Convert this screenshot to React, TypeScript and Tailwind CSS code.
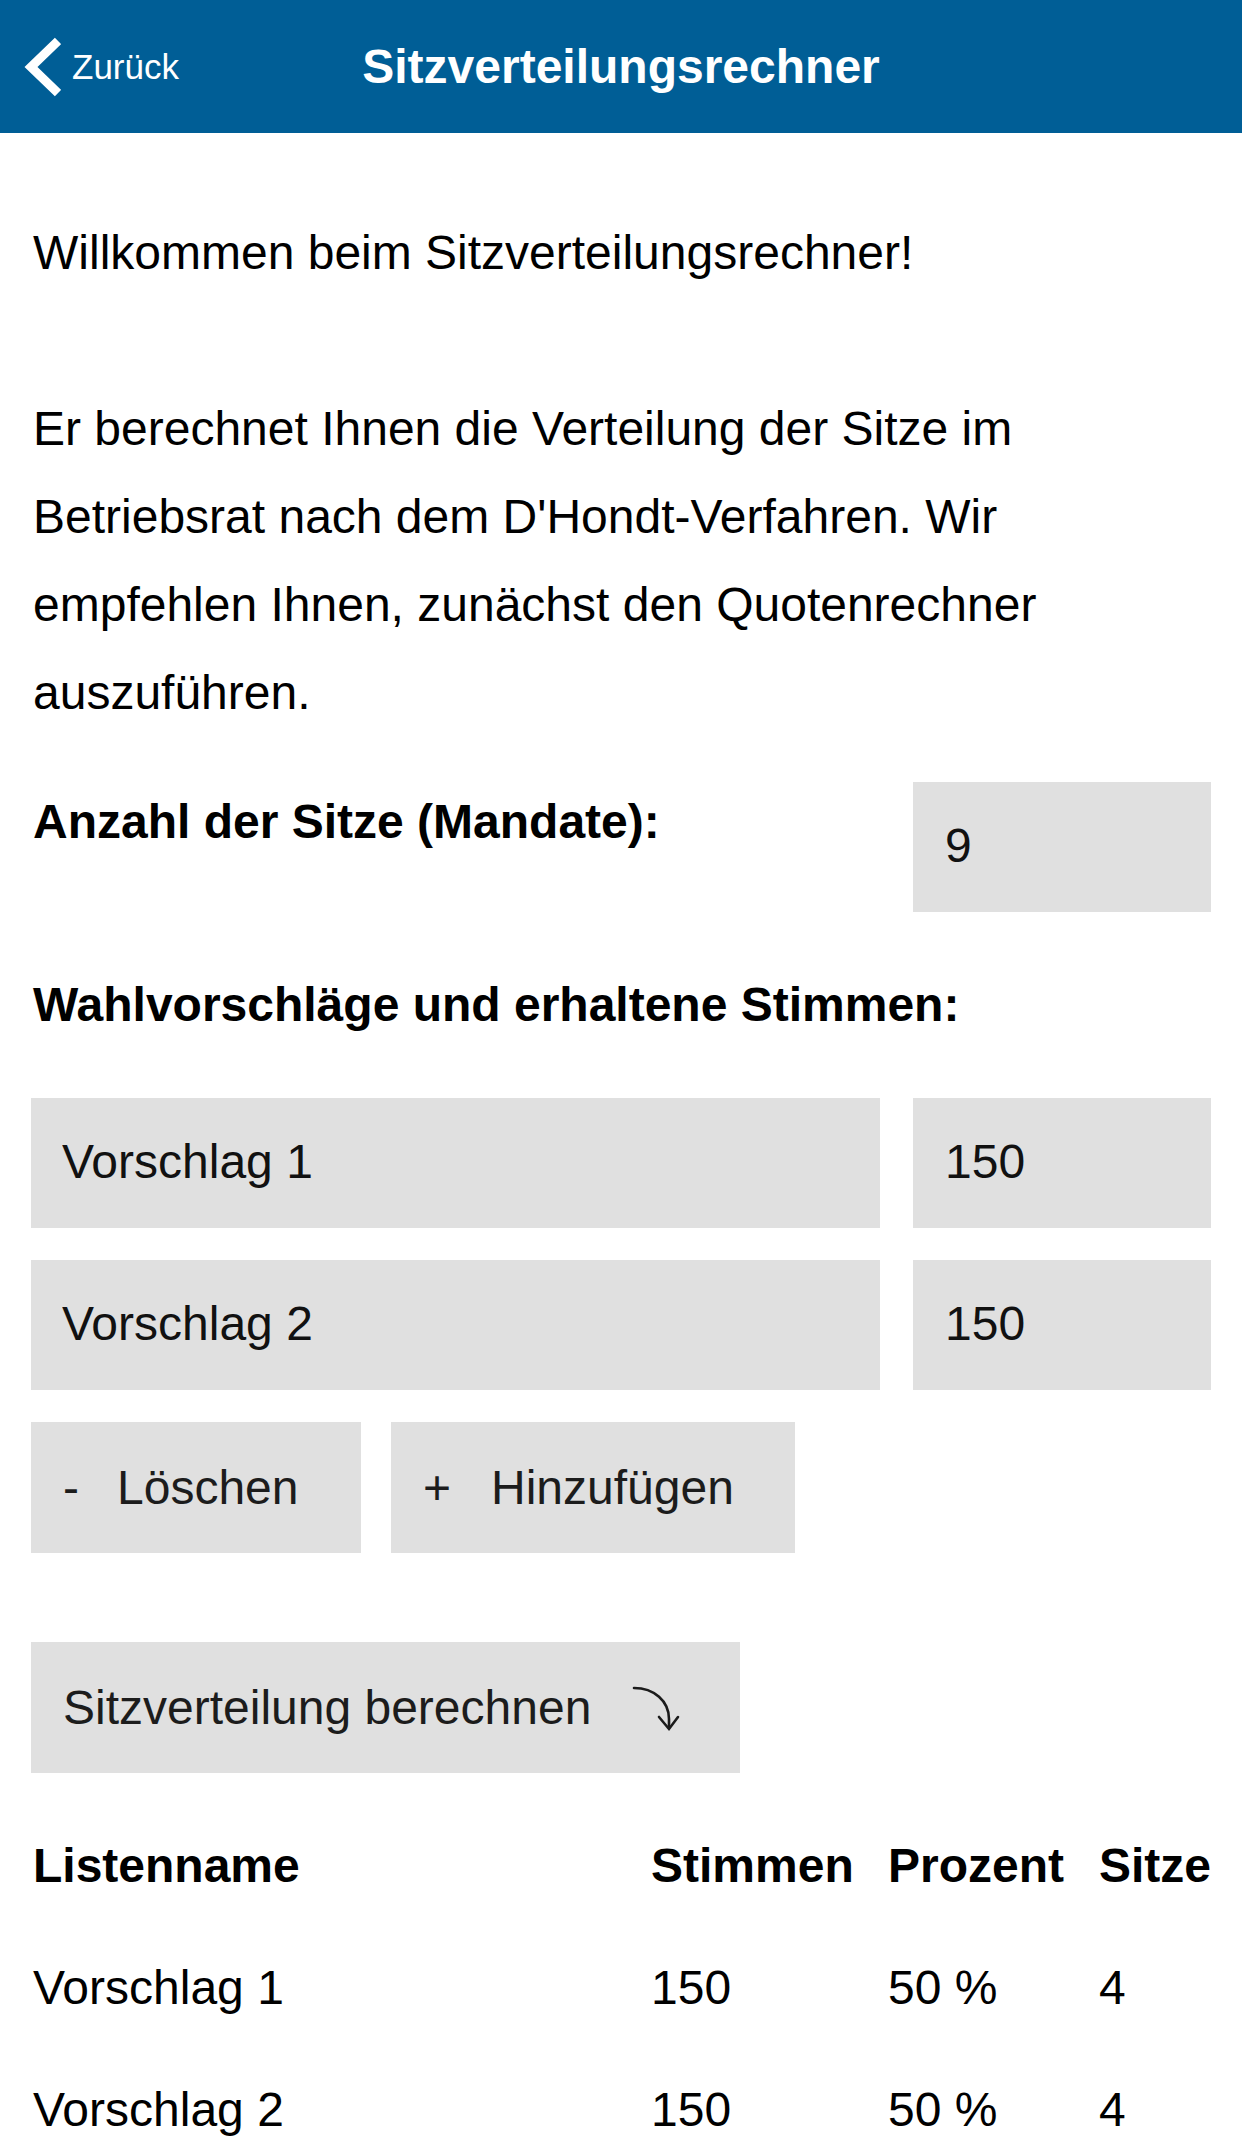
import React from "react";

const rows = [
  { name: "Vorschlag 1", votes: 150 },
  { name: "Vorschlag 2", votes: 150 },
];

const results = [
  { name: "Vorschlag 1", votes: "150", pct: "50 %", seats: "4" },
  { name: "Vorschlag 2", votes: "150", pct: "50 %", seats: "4" },
];

function BackChevron() {
  return (
    <svg width="40" height="60" viewBox="0 0 40 60" aria-hidden="true">
      <polyline
        points="37,4 10,30 37,56"
        fill="none"
        stroke="#ffffff"
        strokeWidth="9"
        strokeLinejoin="miter"
      />
    </svg>
  );
}

function CurvedArrow() {
  return (
    <svg width="50" height="50" viewBox="0 0 50 50" aria-hidden="true">
      <path
        d="M4 5 C 24 5, 39 18, 39 36 L 39 45"
        fill="none"
        stroke="#1c1c1c"
        strokeWidth="2.6"
        strokeLinecap="round"
      />
      <path
        d="M29 34 L39 46 L48 34"
        fill="none"
        stroke="#1c1c1c"
        strokeWidth="2.6"
        strokeLinecap="round"
        strokeLinejoin="miter"
      />
    </svg>
  );
}

export default function App() {
  return (
    <div className="min-h-screen bg-white font-['Liberation_Sans',Arial,sans-serif] text-black">
      {/* Navigation bar */}
      <header className="grid h-[133px] grid-cols-[1fr_auto_1fr] items-center bg-[#005e96] text-white">
        <button className="flex items-center gap-[11px] justify-self-start pl-[21px]">
          <BackChevron />
          <span className="text-[35px] leading-none">Zurück</span>
        </button>
        <h1 className="text-[48px] font-bold leading-none">Sitzverteilungsrechner</h1>
        <div />
      </header>

      <main className="px-[31px]">
        {/* Intro */}
        <p className="mt-[76px] pl-[2px] text-[48px] leading-[88px]">
          Willkommen beim Sitzverteilungsrechner!
          <br />
          <br />
          Er berechnet Ihnen die Verteilung der Sitze im
          <br />
          Betriebsrat nach dem D'Hondt-Verfahren. Wir
          <br />
          empfehlen Ihnen, zunächst den Quotenrechner
          <br />
          auszuführen.
        </p>

        {/* Seat count */}
        <div className="mt-[45px] flex items-start justify-between">
          <label className="mt-[12px] pl-[2px] text-[48px] font-bold leading-[56px]">
            Anzahl der Sitze (Mandate):
          </label>
          <input
            readOnly
            value="9"
            className="h-[130px] w-[298px] bg-[#e0e0e0] px-[32px] pb-[4px] text-[48px] text-[#111111] outline-none"
          />
        </div>

        <h2 className="mt-[65px] pl-[2px] text-[48px] font-bold leading-[56px]">
          Wahlvorschläge und erhaltene Stimmen:
        </h2>

        {/* Lists and votes */}
        <div className="mt-[65px] flex flex-col gap-[32px]">
          {rows.map((r) => (
            <div key={r.name} className="flex gap-[33px]">
              <input
                readOnly
                value={r.name}
                className="h-[130px] flex-1 bg-[#e0e0e0] px-[31px] pb-[3px] text-[48px] text-[#111111] outline-none"
              />
              <input
                readOnly
                value={String(r.votes)}
                className="h-[130px] w-[298px] bg-[#e0e0e0] px-[32px] pb-[3px] text-[48px] text-[#111111] outline-none"
              />
            </div>
          ))}

          <div className="flex gap-[30px]">
            <button className="flex h-[131px] w-[330px] items-center gap-[38px] bg-[#e0e0e0] pl-[32px] text-[48px] text-[#1c1c1c]">
              <span>-</span>
              <span>Löschen</span>
            </button>
            <button className="flex h-[131px] w-[404px] items-center gap-[40px] bg-[#e0e0e0] pl-[32px] text-[48px] text-[#1c1c1c]">
              <span>+</span>
              <span>Hinzufügen</span>
            </button>
          </div>
        </div>

        <button className="mt-[89px] flex h-[131px] w-[709px] items-center gap-[39px] bg-[#e0e0e0] pl-[32px] text-[48px] text-[#1c1c1c]">
          <span>Sitzverteilung berechnen</span>
          <CurvedArrow />
        </button>

        {/* Results */}
        <div className="mt-[32px] grid grid-cols-[618px_237px_211px_1fr] pl-[2px] text-[48px] leading-[122px]">
          <div className="font-bold">Listenname</div>
          <div className="font-bold">Stimmen</div>
          <div className="font-bold">Prozent</div>
          <div className="font-bold">Sitze</div>
          {results.map((r) => (
            <React.Fragment key={r.name}>
              <div>{r.name}</div>
              <div>{r.votes}</div>
              <div>{r.pct}</div>
              <div>{r.seats}</div>
            </React.Fragment>
          ))}
        </div>
      </main>
    </div>
  );
}
